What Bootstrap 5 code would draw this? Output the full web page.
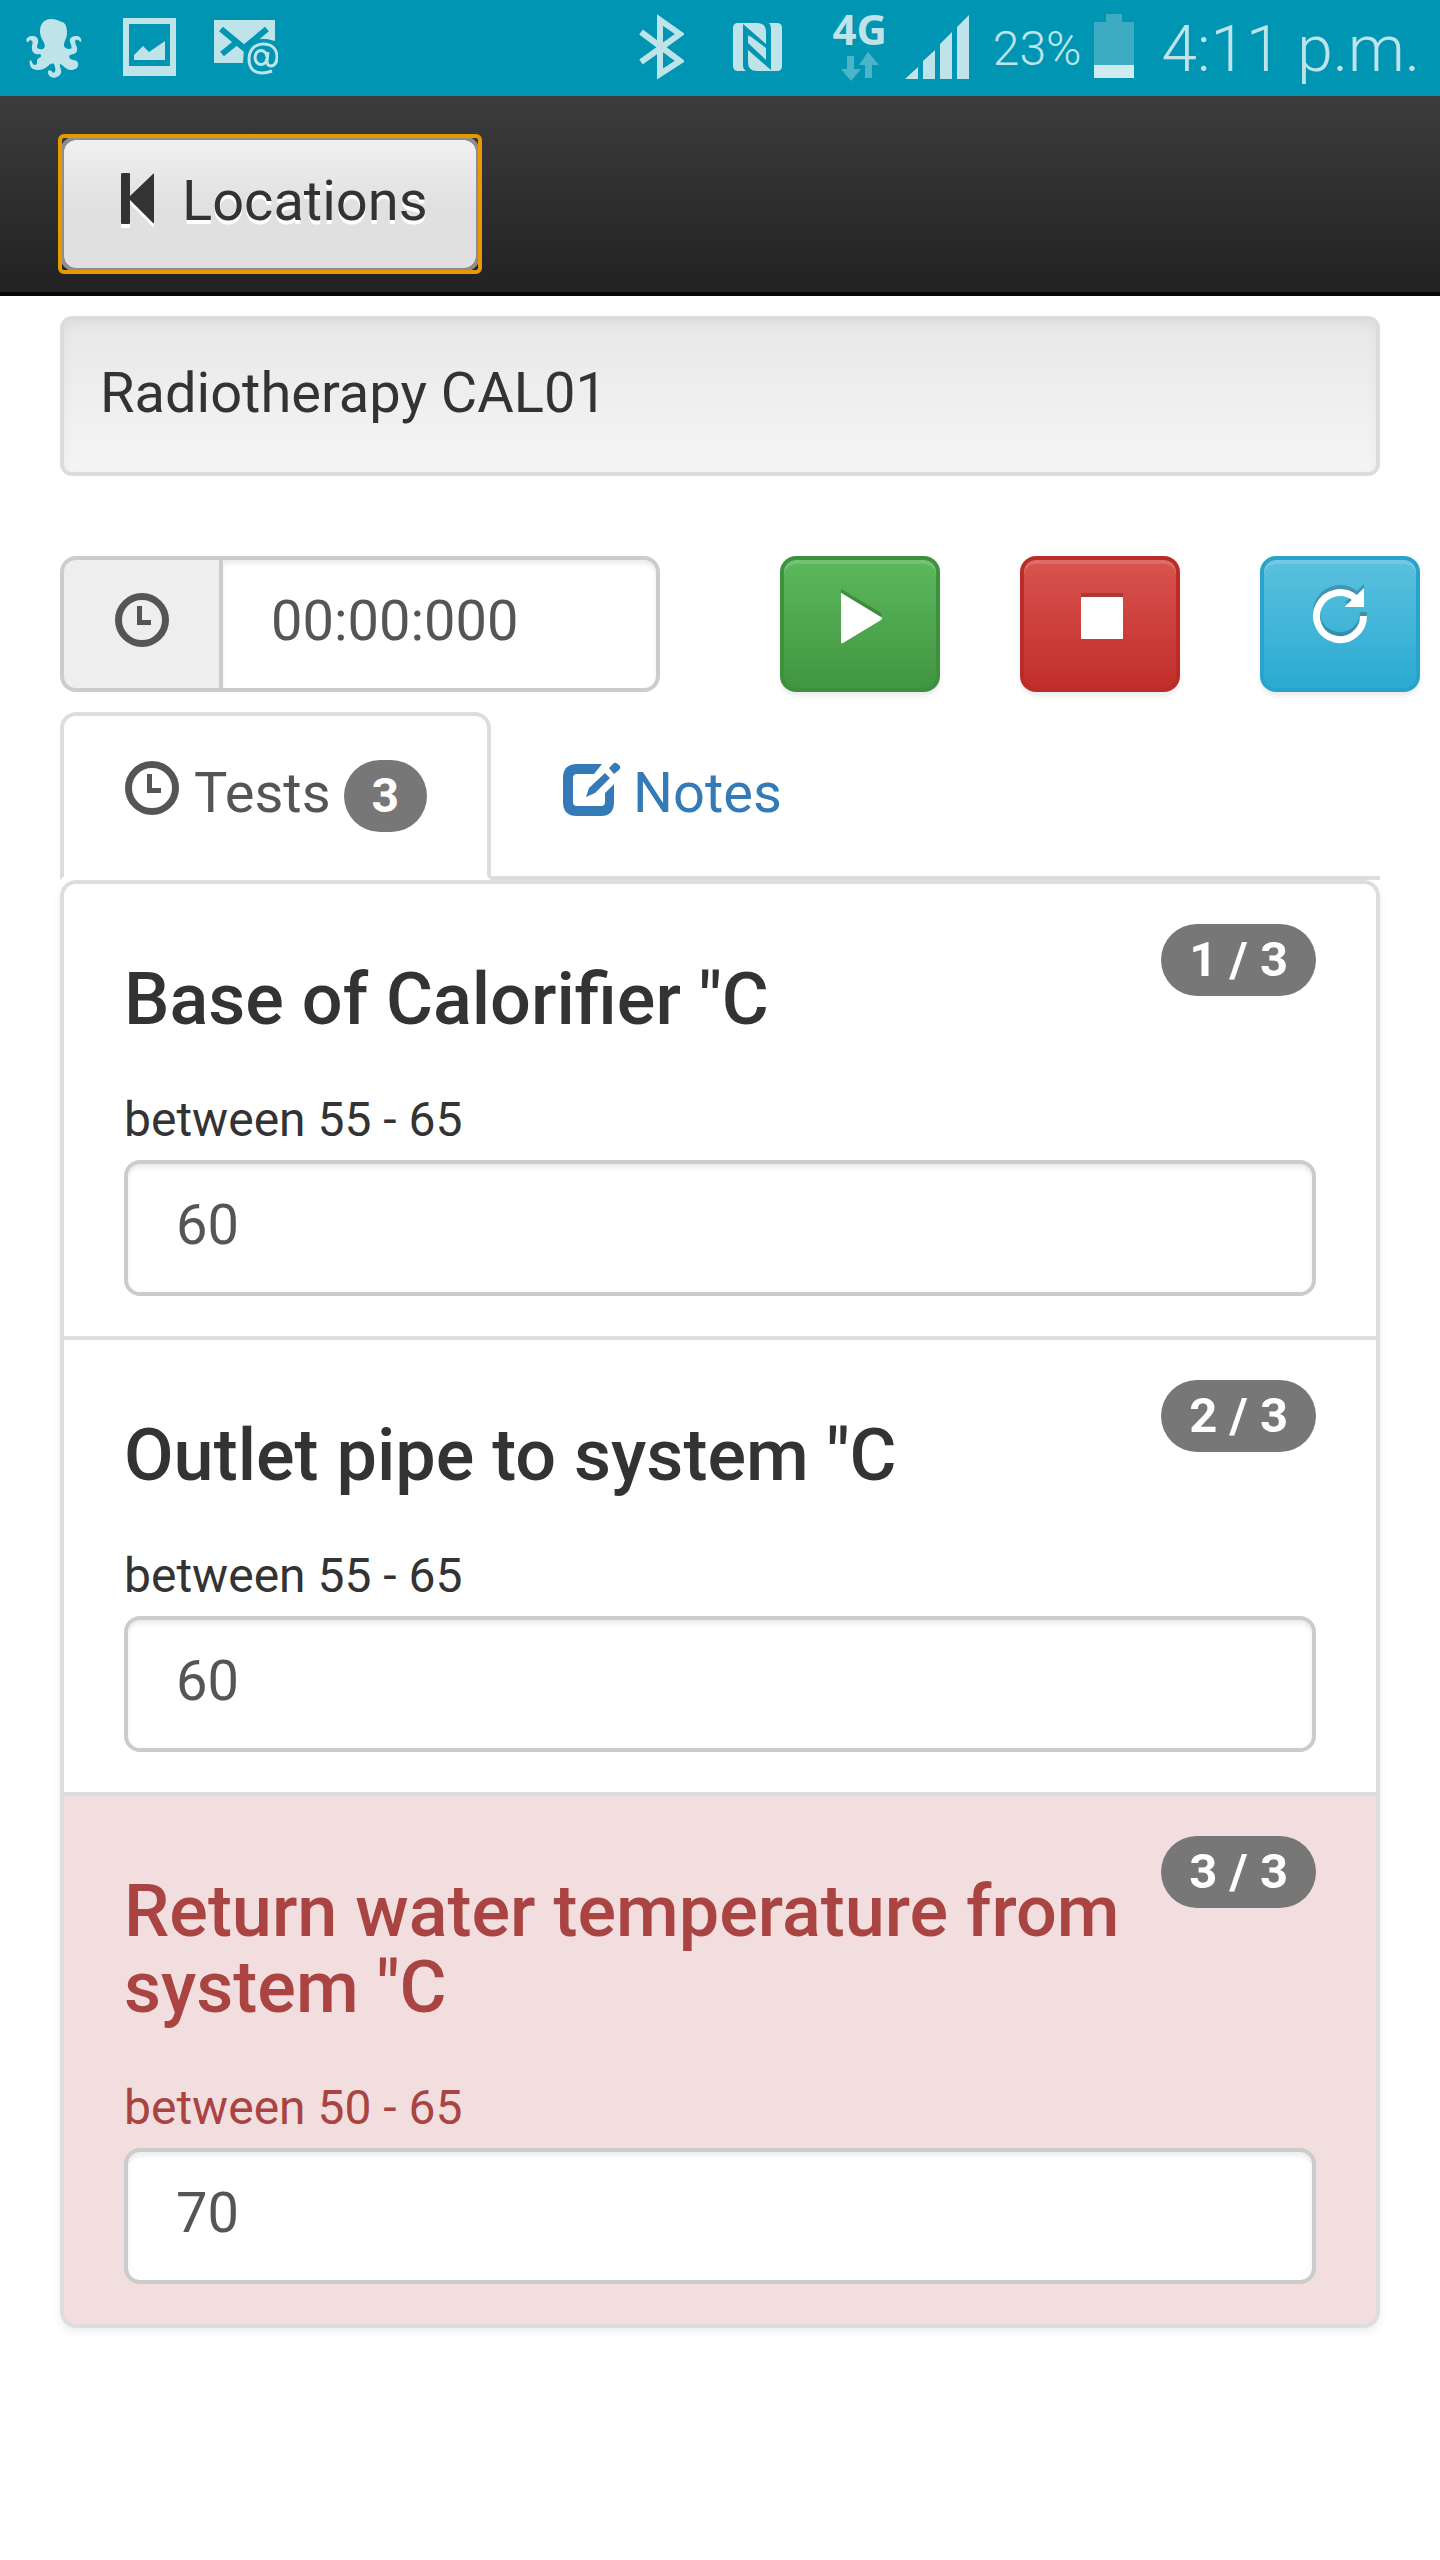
<!DOCTYPE html>
<html lang="en">
<head>
<meta charset="utf-8">
<meta name="viewport" content="width=device-width, initial-scale=1">
<title>Radiotherapy CAL01</title>
<link href="https://cdn.jsdelivr.net/npm/bootstrap@5.3.0/dist/css/bootstrap.min.css" rel="stylesheet">
<style>
  body { font-family: Roboto, "Liberation Sans", sans-serif; font-size: 56px; line-height: 80px; color: #333; background: #fff; }
  svg { display: block; flex: none; }

  .status-strip { background: #0095b3; color: #bee4ea; height: 96px; padding: 0 20px 0 26px; font-weight: 300; }
  .status-strip svg { fill: #bee4ea; }
  .gap-wide { gap: 38px; }
  .gap-radio { gap: 48px; }
  .gap-signal { gap: 18px; }
  .gap-info { gap: 24px; }
  .gap-power { gap: 12px; }
  .net-label { font: 700 42px/54px "Open Sans", "Noto Sans", sans-serif; padding-top: 2px; }
  .charge { font-size: 48px; padding-top: 2px; }
  .clock-text { font-size: 64px; padding-top: 4px; }

  .topbar { background: linear-gradient(#3c3c3c, #222); border-bottom: 4px solid #080808; padding: 40px 60px 20px; }
  .glyph { width: 56px; height: 80px; fill: currentColor; overflow: visible; }

  .btn-tall { font-size: 56px; line-height: 80px; padding: 21px 48px 27px; border-width: 4px; border-radius: 16px; }
  .btn-back { position: relative; gap: 14px; color: #333; border-color: #8e8e8e; background: #e0e0e0 linear-gradient(#f0f0f0, #e0e0e0 68px) padding-box; text-shadow: 0 4px 0 #fff; }
  .btn-back:hover { color: #333; border-color: #8e8e8e; background-color: #e0e0e0; }
  .btn-back svg { filter: drop-shadow(0 4px 0 #fff); }
  .btn-back::after { content: ""; position: absolute; inset: -6px; border: 4px solid #e69a00; border-radius: 6px; }
  .btn-icon { width: 160px; box-shadow: inset 0 4px 0 rgba(255,255,255,.15), 0 4px 4px rgba(0,0,0,.075); color: #fff; }
  .btn-icon svg { filter: drop-shadow(0 -4px 0 rgba(0,0,0,.2)); }
  .btn-go { background: linear-gradient(#5cb85c, #419641); border-color: #3e8f3e; }
  .btn-halt { background: linear-gradient(#d9534f, #c12e2a); border-color: #b92c28; }
  .btn-again { background: linear-gradient(#5bc0de, #2aabd2); border-color: #28a4c9; }

  .page-body { padding: 20px 60px 60px; }
  .well-box { background: linear-gradient(#e8e8e8, #f5f5f5); border: 4px solid #dcdcdc; border-radius: 12px; padding: 33px 36px 39px; margin-bottom: 80px; box-shadow: inset 0 4px 12px rgba(0,0,0,.05); }

  .timer-row { --bs-gutter-x: 120px; margin-bottom: 20px; }
  .field { font-size: 56px; line-height: 80px; padding: 21px 48px 27px; color: #555; border: 4px solid #ccc; border-radius: 16px; box-shadow: inset 0 4px 4px rgba(0,0,0,.075); }
  .timer-addon { background: #eee; border: 4px solid #ccc; border-right: 0; border-radius: 16px; color: #555; padding: 24px 50px; }

  .tab-bar { --bs-nav-tabs-border-width: 4px; border-bottom-color: #ddd; gap: 8px; }
  .tab-bar .nav-link { display: flex; padding: 37px 60px 43px; border: 4px solid transparent; border-radius: 16px 16px 0 0; margin-bottom: -4px; color: #337ab7; gap: 14px; }
  .tab-bar .nav-link.active { color: #555; border-color: #ddd #ddd #fff; }
  .tab-bar .count-pill { margin-top: 6px; font-size: 48px; margin-left: -1px; }
  .count-pill { background: #777; color: #fff; font-size: 49px; line-height: 48px; font-weight: 700; padding: 12px 28px; border-radius: 40px; }

  .test-list { --bs-list-group-border-width: 4px; border-radius: 16px; box-shadow: 0 4px 8px rgba(0,0,0,.075); }
  .test-list .list-group-item { padding: 40px 60px; border: 4px solid #ddd; border-top-width: 4px; color: #333; }
  .test-list .list-group-item + .list-group-item { margin-top: -4px; }
  .test-list .list-group-item:first-child { border-radius: 16px 16px 0 0; }
  .test-list .list-group-item:last-child { border-radius: 0 0 16px 16px; }
  .test-list .item-bad { background: #f2dede; color: #a94442; }
  .test-name { font-size: 72px; line-height: 76px; font-weight: 500; margin: 0; padding: 38px 0; }
  .test-range { display: block; font-size: 48px; line-height: 80px; padding-top: 4px; }
</style>
</head>
<body>

<div class="status-strip d-flex justify-content-between align-items-center">
  <div class="d-flex gap-wide">
    <svg width="58" height="96" viewBox="0 0 58 96" aria-hidden="true">
      <path d="M25 19C32 19 34 22 36 22C40 23 41 28 41 33C41 38 38 41 38 45C38 48 41 49 44 49C47 48 45 45 44 42C43 38 46 36 50 36C54 36 56 39 55 42C53 42 53 39 50 40C47 42 52 46 51 50C51 54 47 54 44 55C42 57 44 59 47 60C50 60 51 61 52 63C53 67 50 70 45 70C40 70 37 65 34 64C33 67 36 69 35 73C34 76 31 77 28 78C25 77 22 76 22 72C22 69 26 70 27 73C31 72 29 67 28 64C26 63 24 64 22 66C18 70 12 71 7 69C4 67 3 63 4 60C6 60 6 65 9 65C13 64 9 60 13 58C15 57 16 56 14 54C10 55 6 53 6 49C5 45 9 41 4 40C2 41 3 43 1 42C-1 39 2 36 6 36C11 36 13 39 12 43C11 46 10 49 14 49C18 50 20 47 18 43C17 40 14 37 14 31C14 23 19 19 25 19Z"/>
    </svg>
    <svg width="54" height="96" viewBox="0 0 54 96" aria-hidden="true">
      <path fill-rule="evenodd" d="M1 18H54V76H1ZM7 24V66H48V24Z"/>
      <path d="M12 55L21 46L27 52L43 41V60H12Z"/>
    </svg>
    <svg width="64" height="96" viewBox="0 0 64 96" aria-hidden="true">
      <path d="M0 20H61V41Q46 36 36 43L30 49L29 63H0Z"/>
      <path d="M7 29L30 48L53 29M8 54L24 41" fill="none" stroke="#0095b3" stroke-width="6"/>
      <circle cx="49" cy="58" r="19" fill="#0095b3"/>
      <path d="M58 71Q53 73 48 73C39 73 35 67 35 59C35 50 41 44 49 44C58 44 63 49 63 57C63 63 60 66 57 66C54 66 53 64 53 61L54 52M53 58A6 7 0 1 1 53 57" fill="none" stroke="#bee4ea" stroke-width="3"/>
    </svg>
  </div>
  <div class="d-flex align-items-center gap-info">
    <div class="d-flex gap-signal">
      <div class="d-flex gap-radio">
        <svg width="46" height="96" viewBox="0 0 46 96" aria-hidden="true">
          <path d="M3 32L42 61L22 74V20L42 34L3 62" fill="none" stroke="#bee4ea" stroke-width="6"/>
        </svg>
        <svg width="52" height="96" viewBox="0 0 52 96" aria-hidden="true">
          <path d="M6 23H25Q34 23 34 32V44L11 24V66Q11 69 14 71H6Q1 71 1 66V28Q1 23 6 23Z"/>
          <path d="M38 23H45Q50 23 50 28V66Q50 71 45 71H25Q16 71 16 62V50L39 70V28Q39 25 37 23Z"/>
          <path d="M16 35V43L34 60V52Z M18 41L34 56V48L18 36Z"/>
        </svg>
        <div class="d-flex flex-column align-items-center">
          <span class="net-label">4G</span>
          <svg width="40" height="40" viewBox="0 6 40 40" overflow="visible" aria-hidden="true" opacity=".4">
            <path d="M7 6H14V19H21L11 31L1 19H7Z M25 28V15H19L28 2L39 15H32V28Z"/>
          </svg>
        </div>
      </div>
      <svg width="64" height="96" viewBox="0 0 64 96" aria-hidden="true">
        <path d="M0 79L13 67V79Z M18 79V61L30 50V79Z M35 79V44L47 32V79Z M52 79V27L64 15V79Z"/>
      </svg>
    </div>
    <div class="d-flex align-items-center gap-power me-1">
      <span class="charge">23%</span>
      <svg width="40" height="96" viewBox="0 0 40 96" aria-hidden="true">
        <path d="M12 14H28V22H40V65H0V22H12Z" fill="#3dabc2"/>
        <path d="M0 65H40V78H0Z" fill="#d0ebf0"/>
      </svg>
    </div>
    <span class="clock-text">4:11 p.m.</span>
  </div>
</div>

<nav class="topbar">
  <button type="button" class="btn btn-tall btn-back d-inline-flex">
    <svg class="glyph" viewBox="0 -3 56 80" aria-hidden="true"><path d="M11 9H17Q18 9 18 10V32L41 10Q42 9 42 10V58Q42 60 41 59L18 36V59Q18 60 17 60H10Q9 60 9 59V10Q9 9 11 9Z"/></svg>
    Locations
  </button>
</nav>

<main class="page-body">
  <div class="well-box">Radiotherapy CAL01</div>

  <div class="row timer-row">
    <div class="col-6">
      <div class="input-group flex-nowrap">
        <label class="input-group-text timer-addon" for="timer" aria-label="Elapsed time">
          <svg class="glyph" viewBox="0 -4 56 80" aria-hidden="true"><circle cx="28" cy="32" r="23.5" fill="none" stroke="currentColor" stroke-width="7"/><path d="M23 18H28V32H37V37H23Z"/></svg>
        </label>
        <input id="timer" type="text" class="form-control field" value="00:00:000">
      </div>
    </div>
    <div class="col-2">
      <button type="button" class="btn btn-tall btn-icon btn-go" aria-label="Start"><svg class="glyph" viewBox="0 -3 56 80" aria-hidden="true"><path d="M9 10Q9 8 11 10L49 33Q51 34 49 36L11 59Q9 60 9 58Z"/></svg></button>
    </div>
    <div class="col-2">
      <button type="button" class="btn btn-tall btn-icon btn-halt" aria-label="Stop"><svg class="glyph" viewBox="0 -3 56 80" aria-hidden="true"><rect x="9" y="13" width="42" height="42" rx="1"/></svg></button>
    </div>
    <div class="col-2">
      <button type="button" class="btn btn-tall btn-icon btn-again" aria-label="Reset"><svg class="glyph" viewBox="0 -3 56 80" aria-hidden="true"><path d="M51.500 32A23.500 23.500 0 1 1 43 14" fill="none" stroke="currentColor" stroke-width="7"/><path d="M52 4V23H32.500Z"/></svg></button>
    </div>
  </div>

  <ul class="nav nav-tabs tab-bar">
    <li class="nav-item">
      <a class="nav-link active" href="#tests" aria-current="page">
        <svg class="glyph" viewBox="0 -3 56 80" aria-hidden="true"><circle cx="28" cy="32" r="23.5" fill="none" stroke="currentColor" stroke-width="7"/><path d="M23 18H28V32H37V37H23Z"/></svg>
        <span>Tests</span>
        <span class="count-pill align-self-center">3</span>
      </a>
    </li>
    <li class="nav-item">
      <a class="nav-link" href="#notes">
        <svg class="glyph" viewBox="0 -3 56 80" aria-hidden="true"><path d="M39 8H14Q0 8 0 22V46Q0 60 14 60H38Q51 60 51 46V28L42 37V46Q42 50 38 50H14Q10 50 10 46V22Q10 18 14 18H31Z"/><path d="M23 41L26 32L42 17L47 22L32 37ZM46 12L51 7Q53 6 57 10Q58 12 56 14L51 18Z"/></svg>
        <span>Notes</span>
      </a>
    </li>
  </ul>

  <ul class="list-group test-list" id="tests">
    <li class="list-group-item">
      <span class="count-pill float-end">1 / 3</span>
      <h4 class="test-name">Base of Calorifier "C</h4>
      <label class="test-range" for="t1">between 55 - 65</label>
      <input id="t1" type="text" class="form-control field" value="60">
    </li>
    <li class="list-group-item">
      <span class="count-pill float-end">2 / 3</span>
      <h4 class="test-name">Outlet pipe to system "C</h4>
      <label class="test-range" for="t2">between 55 - 65</label>
      <input id="t2" type="text" class="form-control field" value="60">
    </li>
    <li class="list-group-item item-bad">
      <span class="count-pill float-end">3 / 3</span>
      <h4 class="test-name">Return water temperature from system "C</h4>
      <label class="test-range" for="t3">between 50 - 65</label>
      <input id="t3" type="text" class="form-control field" value="70">
    </li>
  </ul>
</main>

<script src="https://cdn.jsdelivr.net/npm/bootstrap@5.3.0/dist/js/bootstrap.bundle.min.js"></script>
</body>
</html>
